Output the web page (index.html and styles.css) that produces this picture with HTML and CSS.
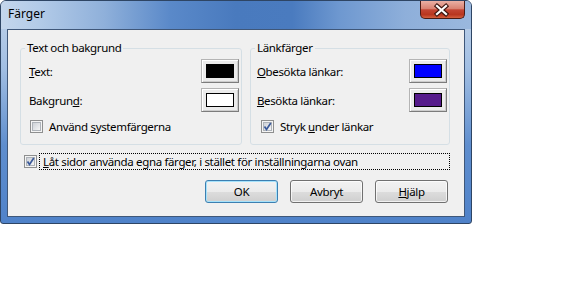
FILE: index.html
```html
<!DOCTYPE html>
<html>
	<head>
		<title>Färger</title>
		<link rel="stylesheet" href="styles.css">
	</head>
	<body>
		<svg class="defs" width="0" height="0">
			<defs>
				<linearGradient id="boxfill" x1="0" y1="0" x2="1" y2="1">
					<stop offset="0" stop-color="#cbcfd5"/>
					<stop offset="1" stop-color="#f7f7f7"/>
				</linearGradient>
			</defs>
		</svg>
		<div class="window">
			<div class="titlebar">
				<span class="title">Färger</span>
				<span class="close">
					<svg width="45" height="18" viewBox="0 0 45 18">
						<path d="M18 5 L27 13 M27 5 L18 13" stroke="#3d1610" stroke-width="4.4" stroke-linecap="square" fill="none"/>
						<path d="M18 5 L27 13 M27 5 L18 13" stroke="#ffffff" stroke-width="2.2" stroke-linecap="square" fill="none"/>
					</svg>
				</span>
			</div>
			<div class="client">
				<div class="groups">
					<fieldset class="group left">
						<legend>Text och bakgrund</legend>
						<div class="row">
							<span><u>T</u>ext:</span>
							<span class="color-btn"><span class="swatch" style="background:#000000"></span></span>
						</div>
						<div class="row">
							<span>Bakgrun<u>d</u>:</span>
							<span class="color-btn"><span class="swatch" style="background:#ffffff"></span></span>
						</div>
						<div class="check-row">
							<svg class="box" width="13" height="13" viewBox="0 0 13 13">
								<rect x="0.5" y="0.5" width="12" height="12" fill="#f4f4f4" stroke="#8e8f8f"/>
								<rect x="2.5" y="2.5" width="8" height="8" fill="url(#boxfill)" stroke="#aeb3b9"/>
							</svg>
							<span>Använd <u>s</u>ystemfärgerna</span>
						</div>
					</fieldset>
					<fieldset class="group right">
						<legend>Länkfärger</legend>
						<div class="row">
							<span><u>O</u>besökta länkar:</span>
							<span class="color-btn"><span class="swatch" style="background:#0000ff"></span></span>
						</div>
						<div class="row">
							<span><u>B</u>esökta länkar:</span>
							<span class="color-btn"><span class="swatch" style="background:#551a8b"></span></span>
						</div>
						<div class="check-row">
							<svg class="box" width="13" height="13" viewBox="0 0 13 13">
								<rect x="0.5" y="0.5" width="12" height="12" fill="#f4f4f4" stroke="#8e8f8f"/>
								<rect x="2.5" y="2.5" width="8" height="8" fill="url(#boxfill)" stroke="#aeb3b9"/>
								<path d="M3.5 6.5 L5.5 9.5 L9.8 3" stroke="#3b5a9a" stroke-width="1.7" fill="none"/>
							</svg>
							<span>Stryk <u>u</u>nder länkar</span>
						</div>
					</fieldset>
				</div>
				<div class="override">
					<svg class="box" width="13" height="13" viewBox="0 0 13 13">
						<rect x="0.5" y="0.5" width="12" height="12" fill="#f4f4f4" stroke="#8e8f8f"/>
						<rect x="2.5" y="2.5" width="8" height="8" fill="url(#boxfill)" stroke="#aeb3b9"/>
						<path d="M3.5 6.5 L5.5 9.5 L9.8 3" stroke="#3b5a9a" stroke-width="1.7" fill="none"/>
					</svg>
					<span class="focus"><u>L</u>åt sidor använda egna färger, i stället för inställningarna ovan</span>
				</div>
				<div class="buttons">
					<span class="btn default">OK</span>
					<span class="btn">Avbryt</span>
					<span class="btn"><u>H</u>jälp</span>
				</div>
			</div>
		</div>
	</body>
</html>
```

FILE: styles.css
```css
body{
	margin:0;
	background-color:#ffffff;
	font-family:"Noto Sans", sans-serif;
	font-size:11.5px;
	letter-spacing:-0.35px;
	color:#000000;
}
.defs{
	position:absolute;
}
.window{
	width:472px;
	height:224px;
	box-sizing:border-box;
	border:1px solid #2e4564;
	border-radius:6px 6px 3px 3px;
	background:linear-gradient(to bottom, #c2d4ea 0, #a2bfe3 30%, #5f8ece 65%, #4f82c9 100%);
	display:flex;
	flex-direction:column;
	overflow:hidden;
}
.titlebar{
	height:28px;
	flex:none;
	display:flex;
	align-items:flex-start;
	background:linear-gradient(to right, #c4d6ec 0, #b3cbe8 8%, #8fb0da 22%, #5a89c9 36%, #497abe 50%, #4a7bbf 62%, #6e98d0 72%, #8eafda 86%, #9ab8de 100%);
}
.title{
	padding:5px 0 0 7px;
	line-height:16px;
	font-size:12px;
	letter-spacing:0;
}
.close{
	margin-left:auto;
	margin-right:6px;
	width:45px;
	height:18px;
	box-sizing:border-box;
	border:1px solid #4a1b14;
	border-top:none;
	border-radius:0 0 5px 5px;
	background:linear-gradient(to bottom, #eab0a4 0, #d98272 45%, #c34533 52%, #b8361f 80%, #d4603f 100%);
	display:flex;
	align-items:center;
	justify-content:center;
}
.close svg{
	display:block;
	margin-left:-2px;
}
.client{
	margin:0 6px;
	height:188px;
	box-sizing:border-box;
	border:1px solid #3f5779;
	background-color:#f0f0f0;
	padding:10px 14px 0 12px;
}
.groups{
	display:flex;
	gap:8px;
}
.group{
	margin:0;
	height:105px;
	box-sizing:border-box;
	border:1px solid #d5dfe5;
	border-radius:3px;
	padding:3px 2px 0 8px;
	min-width:0;
}
.group.left{
	width:223px;
}
.group.right{
	width:201px;
	padding-left:6px;
}
legend{
	padding:0 2px;
	margin-left:-2px;
	line-height:16px;
}
.group.left legend{
	margin-left:-4px;
}
.row{
	display:flex;
	align-items:center;
	justify-content:space-between;
	height:24px;
	margin-bottom:5px;
}
.color-btn{
	width:38px;
	height:24px;
	box-sizing:border-box;
	border:1px solid #b4b4b4;
	border-right-color:#7c7c7c;
	border-bottom-color:#7c7c7c;
	box-shadow:inset 1px 1px #ffffff, inset -1px -1px #cdcdcd;
	background-color:#ebebeb;
	display:flex;
	align-items:center;
	justify-content:center;
}
.swatch{
	width:28px;
	height:14px;
	box-sizing:border-box;
	border:1px solid #000000;
}
.check-row{
	display:flex;
	align-items:center;
	gap:6px;
	height:17px;
	margin-top:6px;
	padding-left:1px;
}
.group.right .check-row{
	padding-left:4px;
}
.box{
	display:block;
	flex:none;
}
.override{
	display:flex;
	align-items:center;
	gap:2px;
	margin-top:8px;
	padding-left:4px;
}
.focus{
	flex:1;
	border:1px dotted #000000;
	padding:0 3px;
	line-height:15px;
}
.buttons{
	display:flex;
	justify-content:flex-end;
	gap:12px;
	margin-top:10px;
	padding-right:2px;
}
.btn{
	width:73px;
	height:23px;
	box-sizing:border-box;
	border:1px solid #707070;
	border-radius:3px;
	background:linear-gradient(to bottom, #f2f2f2 0, #ebebeb 50%, #dddddd 50%, #cfcfcf 100%);
	box-shadow:inset 0 0 0 1px rgba(255,255,255,0.7);
	display:flex;
	align-items:center;
	justify-content:center;
}
.btn.default{
	border-color:#3c7fb1;
	box-shadow:inset 0 0 0 1px #a6e2fb;
}
```
